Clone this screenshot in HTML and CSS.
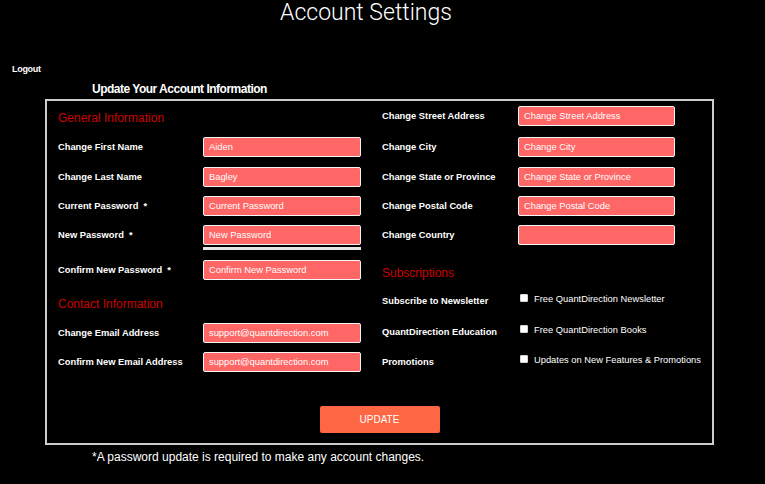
FILE: index.html
```html
<!DOCTYPE html>
<html lang="en">
<head>
<meta charset="utf-8">
<title>Account Settings</title>
<link rel="stylesheet" href="styles.css">
</head>
<body>
<h1 class="title">Account Settings</h1>
<a class="logout" href="#">Logout</a>
<h2 class="form-heading">Update Your Account Information</h2>
<form class="panel">
  <div class="cols">
    <div class="col col-left">
      <h3 class="section section-general">General Information</h3>
      <div class="field gap-12"><label>Change First Name</label><input type="text" value="Aiden"></div>
      <div class="field gap-10"><label>Change Last Name</label><input type="text" value="Bagley"></div>
      <div class="field gap-9"><label>Current Password&nbsp; *</label><input type="text" placeholder="Current Password"></div>
      <div class="field gap-9"><label>New Password&nbsp; *</label><input type="text" placeholder="New Password"></div>
      <div class="strength"></div>
      <div class="field gap-10"><label>Confirm New Password&nbsp; *</label><input type="text" placeholder="Confirm New Password"></div>
      <h3 class="section section-contact">Contact Information</h3>
      <div class="field gap-12"><label>Change Email Address</label><input type="text" value="support@quantdirection.com"></div>
      <div class="field gap-9"><label>Confirm New Email Address</label><input type="text" value="support@quantdirection.com"></div>
    </div>
    <div class="col col-right">
      <div class="field gap-5"><label>Change Street Address</label><input type="text" placeholder="Change Street Address"></div>
      <div class="field gap-11"><label>Change City</label><input type="text" placeholder="Change City"></div>
      <div class="field gap-10"><label>Change State or Province</label><input type="text" placeholder="Change State or Province"></div>
      <div class="field gap-9"><label>Change Postal Code</label><input type="text" placeholder="Change Postal Code"></div>
      <div class="field gap-9"><label>Change Country</label><input type="text"></div>
      <h3 class="section section-subs">Subscriptions</h3>
      <div class="check-row gap-12"><span class="check-label">Subscribe to Newsletter</span><span class="check"><span class="box"></span>Free QuantDirection Newsletter</span></div>
      <div class="check-row gap-17"><span class="check-label">QuantDirection Education</span><span class="check"><span class="box"></span>Free QuantDirection Books</span></div>
      <div class="check-row gap-16"><span class="check-label">Promotions</span><span class="check"><span class="box"></span>Updates on New Features &amp; Promotions</span></div>
    </div>
  </div>
  <div class="actions"><button type="button" class="update">UPDATE</button></div>
</form>
<p class="note">*A password update is required to make any account changes.</p>
</body>
</html>
```
FILE: styles.css
```css
html, body {
  margin: 0;
  padding: 0;
  background: #000;
  color: #fff;
  font-family: "Liberation Sans", Arial, sans-serif;
}

.title {
  margin: 0;
  padding-right: 33px;
  text-align: center;
  font-family: Roboto, "Liberation Sans", sans-serif;
  font-weight: 300;
  font-size: 23px;
  line-height: 26px;
  color: #fff;
}

.logout {
  display: block;
  margin: 38px 0 0 12px;
  width: max-content;
  font-size: 9px;
  line-height: 11px;
  font-weight: bold;
  letter-spacing: -0.3px;
  color: #fff;
  text-decoration: none;
}

.form-heading {
  margin: 7px 0 0 92px;
  font-size: 12px;
  line-height: 14px;
  font-weight: bold;
  letter-spacing: -0.5px;
}

.panel {
  box-sizing: border-box;
  width: 669px;
  margin: 3px 0 0 45px;
  border: 2px solid #cccccc;
  padding: 0 0 10px 11px;
}

.cols {
  display: flex;
  gap: 21px;
}

.col {
  display: flex;
  flex-direction: column;
}

.section {
  margin: 0;
  height: 14px;
  font-size: 12px;
  line-height: 14px;
  font-weight: normal;
  color: #cc0000;
}

.section-general { margin-top: 10px; }
.section-contact { margin-top: 17px; }
.section-subs { margin-top: 21px; }

.field {
  display: flex;
  align-items: center;
  height: 20px;
}

.field label {
  font-size: 7pt;
  font-weight: bold;
  white-space: nowrap;
}

.col-left .field label { width: 145px; }
.col-right .field label { width: 136px; }

.field input {
  box-sizing: border-box;
  height: 20px;
  margin: 0;
  padding: 0 5px;
  border: 1px solid #f4f4f4;
  border-radius: 2px;
  background: #ff6666;
  color: #fff;
  font-family: "Liberation Sans", Arial, sans-serif;
  font-size: 7pt;
  outline: none;
}

.col-left .field input { width: 158px; }
.col-right .field input { width: 157px; }

.field input::placeholder {
  color: #fff;
  opacity: 1;
}

.strength {
  margin: 2px 0 0 145px;
  width: 158px;
  height: 3px;
  background: #e4e4e4;
}

.gap-5 { margin-top: 5px; }
.gap-9 { margin-top: 9px; }
.gap-10 { margin-top: 10px; }
.gap-11 { margin-top: 11px; }
.gap-12 { margin-top: 12px; }
.gap-16 { margin-top: 16px; }
.gap-17 { margin-top: 17px; }

.check-row {
  display: flex;
  align-items: flex-start;
  height: 14px;
  line-height: 14px;
  font-size: 7pt;
}

.check-label {
  width: 136px;
  padding-top: 2px;
  font-weight: bold;
  white-space: nowrap;
}

.check {
  display: flex;
  align-items: flex-start;
  margin-left: 2px;
  white-space: nowrap;
}

.check .box {
  box-sizing: border-box;
  width: 8px;
  height: 8px;
  margin: 2px 6px 0 0;
  background: #fff;
  border: 1px solid #d8d8d8;
  border-radius: 1px;
}

.actions {
  display: flex;
  justify-content: center;
  margin-top: 34px;
  padding-right: 11px;
}

.update {
  width: 120px;
  height: 27px;
  border: none;
  border-radius: 2px;
  background: #ff6644;
  color: #fff;
  font-family: "Liberation Sans", Arial, sans-serif;
  font-size: 10px;
  cursor: pointer;
}

.note {
  margin: 5px 0 0 92px;
  font-size: 12px;
  line-height: 14px;
}
```
